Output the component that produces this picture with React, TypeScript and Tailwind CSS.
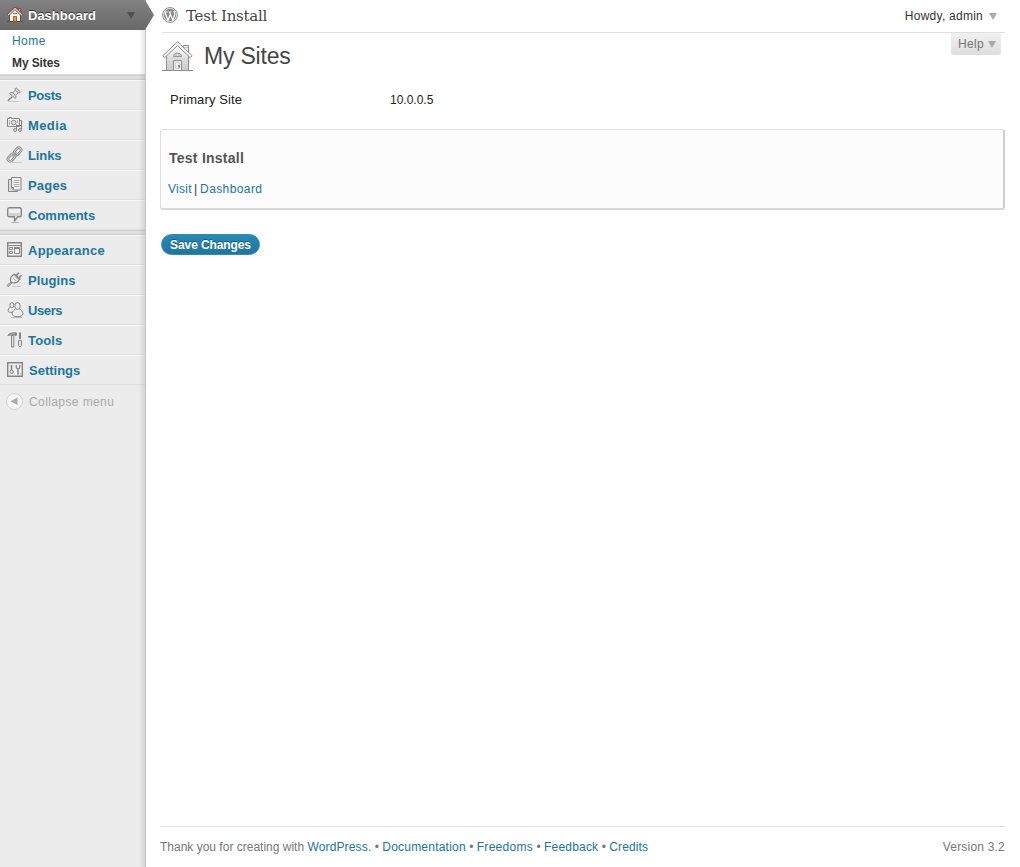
import React from "react";

type IconName = "posts" | "media" | "links" | "pages" | "comments" | "appearance" | "plugins" | "users" | "tools" | "settings";

const glyphs: Record<IconName, React.ReactNode> = {
  posts: (
    <>
      <path d="M1 14.500h11" stroke="#cacaca" />
      <path d="M5.200 9.800.800 13.700" strokeWidth="1.500" />
      <path d="M9 .800 13.300 4.800 12.300 5.900 11.200 5.700 8.700 8.400 9 10.500 8 11.300 2.600 6.500 3.600 5.500 5.800 5.700 8.500 3.200 8 1.800z" fill="#e8e8e8" />
      <path d="M5.800 5.800 8.700 8.400M8.500 3.200 11.200 5.700" />
    </>
  ),
  media: (
    <>
      <path d="M.5 1.500h2v-1h2v1h8v8H.5z" fill="#f4f4f4" />
      <circle cx="6.700" cy="5.500" r="2.300" fill="#e2e2e2" />
      <path d="M2.500 3v5M10.500 3v3" stroke="#aaa" />
      <path d="M12.500 3.500h2v9M9.500 7.500v5M9.500 8.500h5" />
      <circle cx="8.200" cy="13" r="1.500" fill="#ddd" />
      <circle cx="13" cy="13" r="1.500" fill="#ddd" />
    </>
  ),
  links: (
    <>
      <path d="M5 15.500h10" stroke="#ccc" />
      <rect x="6.300" y="2.200" width="8.500" height="4.600" rx="2.300" transform="rotate(-48 10.500 4.500)" strokeWidth="2.400" />
      <rect x="6.300" y="2.200" width="8.500" height="4.600" rx="2.300" transform="rotate(-48 10.500 4.500)" stroke="#e9e9e9" strokeWidth=".8" />
      <rect x=".2" y="8.200" width="8.500" height="4.600" rx="2.300" transform="rotate(-48 4.500 10.500)" strokeWidth="2.400" />
      <rect x=".2" y="8.200" width="8.500" height="4.600" rx="2.300" transform="rotate(-48 4.500 10.500)" stroke="#e9e9e9" strokeWidth=".8" />
      <path d="m5.500 9.500 4-4" stroke="#9a9a9a" strokeWidth="1.600" />
    </>
  ),
  pages: (
    <>
      <path d="M4 2.500H1.500v12h9V13" fill="#ddd" />
      <path d="M4.500.500h9.500v12.500h-7.500l-2-2z" fill="#f1f1f1" />
      <path d="M6.500 3.500h6M6.500 5.500h6M6.500 7.500h6M7.500 9.500h5" stroke="#b0b0b0" />
      <path d="M4.500 10.500h2v2" />
    </>
  ),
  comments: (
    <>
      <path d="M4 15.500h8" stroke="#b5b5b5" />
      <path d="M2.500.700h10c1.200 0 1.800.600 1.800 1.800v5.500c0 1.200-.6 1.800-1.800 1.800h-2L7.500 14V9.800h-5C1.300 9.800.700 9.200.700 8V2.500C.700 1.300 1.300.700 2.500.700z" fill="#f0f0f0" strokeWidth="1.400" />
      <path d="M2 7.500h11" stroke="#d2d2d2" strokeWidth="3" />
    </>
  ),
  appearance: (
    <>
      <path d="M.700.700h13.600v13.600H.700z" fill="#f3f3f3" strokeWidth="1.400" />
      <path d="M1 3.500h13" />
      <path d="M2.500 5.500h3v2h-3zM2.500 9.500h3v2h-3zM7.500 5.500h5v6h-5z" />
      <path d="M7.500 6.500h5" />
    </>
  ),
  plugins: (
    <>
      <path d="M5 14.500h9" stroke="#ccc" />
      <path d="M4.500 10.500C3.300 12.500 2 11.500.500 14.500" strokeWidth="2.400" />
      <path d="M4.500 10.500C3.300 12.500 2 11.500.500 14.500" stroke="#e5e5e5" strokeWidth=".7" />
      <path d="M7.500 2.300C4.500 3.500 2.800 6.500 4 10.300c3.800 1.400 7 .2 8.500-3z" fill="#eee" strokeWidth="1.200" />
      <path d="m6.700 1.800 6.600 6" strokeWidth="1.500" />
      <path d="M9 4 11.800.700M11.500 6.500l3-3.300" strokeWidth="1.700" />
      <path d="m6.200 6 3.300 3.300M8 4.500l3 3" stroke="#aaa" />
    </>
  ),
  users: (
    <>
      <path d="M4 15.500h11" stroke="#b8b8b8" />
      <path d="M4.200 4.800C1.500 5.500.700 7.800 1.400 9.800c1 .8 3.500.8 5 .3" fill="#eee" />
      <ellipse cx="4.900" cy="3.200" rx="2" ry="2.500" fill="#eee" />
      <path d="M8.500 6.500c-1 2-3.500 2.700-3.500 5.200 0 4 11 4 11 0 0-2.500-2.500-3.200-3.500-5.200" fill="#eee" />
      <ellipse cx="10.500" cy="4" rx="2.700" ry="3.500" fill="#eee" />
    </>
  ),
  tools: (
    <>
      <path d="M.800 3.500C2.500 1 5 .500 9.500 1v2H3z" fill="#aaa" />
      <path d="M4.500 3.500h2.300v11.500H4.500z" fill="#e6e6e6" />
      <path d="M8.800.500v3.300" strokeWidth="1.500" />
      <path d="M13 .500v6.500" strokeWidth="2" />
      <path d="M11.500 8.500h3v4.500c0 2-3 2-3 0z" fill="#e6e6e6" />
    </>
  ),
  settings: (
    <>
      <path d="M.700.700h14.600v13.600H.700z" fill="#f1f1f1" strokeWidth="1.400" />
      <path d="M4.500 3v5M11 8v4.500" strokeWidth="1.600" />
      <circle cx="4.700" cy="9.800" r="1.700" fill="#ddd" />
      <path d="M9.300 3v2.700L11 7.200l1.700-1.500V3" strokeWidth="1.300" />
      <path d="M2.500 3.500h1M6.500 3.500h1M13 11.500h1" stroke="#bbb" />
    </>
  ),
};

function MenuIcon({ name }: { name: IconName }) {
  return (
    <svg className="ml-[7px] h-4 w-4 shrink-0 overflow-visible" viewBox="0 0 16 16" fill="none" stroke="#858585" strokeLinejoin="round">
      {glyphs[name]}
    </svg>
  );
}

const content: { icon: IconName; label: string; spacing: string }[] = [
  { icon: "posts", label: "Posts", spacing: "tracking-[-0.4px]" },
  { icon: "media", label: "Media", spacing: "tracking-[0.4px]" },
  { icon: "links", label: "Links", spacing: "tracking-[-0.1px]" },
  { icon: "pages", label: "Pages", spacing: "tracking-[0.2px]" },
  { icon: "comments", label: "Comments", spacing: "tracking-[0px]" },
];

const admin: typeof content = [
  { icon: "appearance", label: "Appearance", spacing: "tracking-[0.25px]" },
  { icon: "plugins", label: "Plugins", spacing: "tracking-[0.1px]" },
  { icon: "users", label: "Users", spacing: "tracking-[-0.4px]" },
  { icon: "tools", label: "Tools", spacing: "tracking-[0.15px]" },
  { icon: "settings", label: "Settings", spacing: "tracking-[0px] pl-px" },
];

function Menu({ items }: { items: typeof content }) {
  return (
    <ul>
      {items.map((item) => (
        <li key={item.label} className="flex h-[30px] items-center border-t border-b border-t-[#f9f9f9] border-b-[#dfdfdf]">
          <MenuIcon name={item.icon} />
          <a className={`ml-[5px] pt-px text-[13px] leading-[18px] font-bold whitespace-nowrap text-[#21759b] ${item.spacing}`}>{item.label}</a>
        </li>
      ))}
    </ul>
  );
}

function Separator() {
  return <div className="h-[5px] border-y border-[#cfcfcf] bg-[#dfdfdf]" />;
}

function SmallHouse() {
  return (
    <svg className="ml-[7px] h-4 w-4 shrink-0" viewBox="0 0 16 16">
      <path d="M0 14.500h16" stroke="#4c4c4c" />
      <path d="M11.500 1.500h2v4h-2z" fill="#e9aaa0" stroke="#70382f" strokeWidth=".7" />
      <path d="M2.500 8 8 2.500 13.500 8v6.500h-11z" fill="#fff1ec" stroke="#754840" />
      <path d="m.900 8 7.100-7 7.100 7" fill="none" stroke="#693c36" strokeWidth="2.400" />
      <path d="m1.200 8 6.800-6.700L14.800 8" fill="none" stroke="#f8cdc4" strokeWidth="1.200" />
      <path d="M6.500 14.500v-5h3v5z" fill="#e2a044" stroke="#8c4c16" strokeWidth=".8" />
      <path d="M6 6.500h4" stroke="#5793bc" strokeWidth="1.400" />
    </svg>
  );
}

function LargeHouse() {
  return (
    <svg className="h-[31px] w-[31px]" viewBox="0 0 31 31" fill="none" stroke="#8e8e8e">
      <defs>
        <linearGradient id="wall" x1="0" y1="0" x2="0" y2="1">
          <stop offset="0" stopColor="#fafafa" />
          <stop offset="1" stopColor="#cacaca" />
        </linearGradient>
      </defs>
      <path d="M0 29.500h31" stroke="#8a8a8a" />
      <path d="M21.500 4.500h5v8h-5z" fill="#f2f2f2" />
      <path d="M22 6.500h4" stroke="#c5c5c5" />
      <path d="M4.500 14 15.500 4l11 10v15.500h-22z" fill="url(#wall)" />
      <path d="M5 17.500h21M5 20.500h21M5 23.500h21M5 26.500h21" stroke="#c8c8c8" strokeWidth=".5" />
      <path d="M.800 14.800 15.500.700l14.700 14.100-1.900 1.900L15.500 4.500 2.700 16.700z" fill="#f8f8f8" />
      <path d="M11.500 15.500c0-4.500 8-4.500 8 0z" fill="#e2e2e2" />
      <path d="M14 12.500v3M17 12.500v3" stroke="#b0b0b0" />
      <path d="M11.500 19.500h8v10h-8z" fill="#ececec" />
      <path d="M13.500 21.500h4v6h-4z" stroke="#cfcfcf" />
      <path d="M17 24v2.500" stroke="#6e6e6e" strokeWidth="1.500" />
    </svg>
  );
}

function Logo() {
  return (
    <svg className="h-4 w-4 shrink-0 overflow-visible" viewBox="0 0 16 16" fill="none" stroke="#858585">
      <circle cx="8" cy="8" r="7.400" fill="#fff" />
      <circle cx="8" cy="8" r="6.200" fill="#888" stroke="none" />
      <path d="M2.800 5.200 6 13.300 8.300 7.500 7.500 5.200M7.500 5.200 10.800 13.300l2-6c.3-1.200-.7-2.200-1-3.400M2.300 5h3.400M6.500 5h3" stroke="#fff" strokeWidth="1.200" />
    </svg>
  );
}

function Caret({ color }: { color: string }) {
  return (
    <svg className="h-[7px] w-2 shrink-0" viewBox="0 0 8 7">
      <path d="M0 0h8L4 7z" fill={color} />
    </svg>
  );
}

export default function App() {
  return (
    <div className="flex h-[867px] w-[1020px] overflow-hidden bg-white font-['Liberation_Sans',Arial,sans-serif] text-[12px] text-[#333]">
      <aside className="relative w-[146px] shrink-0 border-r border-[#c6c6c6] bg-[#ececec]">
        <div className="relative flex h-[30px] items-center bg-linear-to-b from-[#828282] to-[#686868]">
          <SmallHouse />
          <span className="ml-[5px] pt-px text-[13px] leading-[18px] font-bold text-white [text-shadow:0_-1px_0_#333]">Dashboard</span>
          <span className="ml-[31px] flex"><Caret color="#505050" /></span>
          <svg className="absolute top-0 left-[145px] z-10 h-[30px] w-[9px]" viewBox="0 0 9 30">
            <defs>
              <linearGradient id="arrow" x1="0" y1="0" x2="0" y2="1">
                <stop offset="0" stopColor="#828282" />
                <stop offset="1" stopColor="#686868" />
              </linearGradient>
            </defs>
            <path d="M0 0 9 15 0 30z" fill="url(#arrow)" />
          </svg>
        </div>
        <nav className="flex h-[44px] flex-col bg-white pl-3 leading-[22px]">
          <a className="tracking-[0.45px] text-[#21759b]">Home</a>
          <a className="font-bold tracking-[-0.1px]">My Sites</a>
        </nav>
        <div className="h-px bg-[#dfdfdf]" />
        <Separator />
        <Menu items={content} />
        <Separator />
        <Menu items={admin} />
        <div className="flex h-[33px] items-center pl-[6px] text-[#aaa]">
          <svg className="h-[17px] w-[17px]" viewBox="0 0 17 17">
            <circle cx="8.500" cy="8.500" r="8" fill="#f5f5f5" stroke="#cfcfcf" />
            <path d="M11.500 4.500v7.500L4.500 8.300z" fill="#aaa" />
          </svg>
          <span className="ml-[6px] pt-px tracking-[0.4px]">Collapse menu</span>
        </div>
        <div className="absolute top-[30px] right-0 bottom-0 w-[6px] bg-linear-to-r from-transparent to-black/10" />
      </aside>

      <main className="ml-[14px] flex w-[845px] flex-col">
        <header className="ml-[2px] flex h-[33px] items-center border-b border-[#dfdfdf] pb-[2px]">
          <Logo />
          <h1 className="ml-2 pt-px font-['DejaVu_Serif',serif] text-[15px] leading-5 tracking-[-0.25px] text-[#464646]">Test Install</h1>
          <span className="ml-auto pt-px tracking-[0.25px]">Howdy, admin</span>
          <span className="mr-[8px] ml-[6px] flex pt-[2px]"><Caret color="#aaa" /></span>
        </header>
        <div className="flex h-[44px] items-start pl-[2px]">
          <div className="mt-[8px]"><LargeHouse /></div>
          <h2 className="mt-[6px] ml-[11px] text-[23px] leading-[34px] tracking-[-0.2px] text-[#464646]">My Sites</h2>
          <div className="mr-[4px] ml-auto flex h-[22px] w-[50px] items-center rounded-b-[3px] bg-linear-to-b from-[#f0f0f0] to-[#dedede] pl-[7px] text-[#777]">
            <span className="tracking-[0.3px]">Help</span>
            <span className="ml-[4px] flex"><Caret color="#aaa" /></span>
          </div>
        </div>
        <div className="flex h-[52px] items-center pl-[10px]">
          <div className="w-[220px] pb-[6px] text-[13px] tracking-[0.1px] text-[#222]">Primary Site</div>
          <div className="pb-[6px] text-[12px] text-[#222]">10.0.0.5</div>
        </div>
        <section className="h-[81px] shrink-0 rounded-[3px] border border-r-2 border-b-2 border-[#dfdfdf] border-r-[#cfcfcf] border-b-[#d8d8d8] bg-[#fcfcfc] pt-[18px] pl-[7px]">
          <h3 className="pl-px text-[14px] leading-5 font-bold tracking-[0.25px] text-[#555]">Test Install</h3>
          <p className="mt-[12px] leading-[18px] text-[#333]">
            <a className="tracking-[0.3px] text-[#21759b]">Visit</a>
            <span className="mr-[3px] ml-[2px]">|</span>
            <a className="tracking-[0.4px] text-[#21759b]">Dashboard</a>
          </p>
        </section>
        <button className="mt-[24px] ml-px h-[21px] w-[99px] shrink-0 rounded-full border border-[#298cba] bg-linear-to-b from-[#278ab7] to-[#21759b] text-[12px] leading-[18px] font-bold tracking-[-0.1px] whitespace-nowrap text-white [text-shadow:0_-1px_0_#195773]">Save Changes</button>
        <footer className="mt-auto flex h-[41px] shrink-0 items-center justify-between border-t border-[#dfdfdf] text-[#777]">
          <p className="whitespace-nowrap">
            Thank you for creating with <a className="tracking-[0.15px] text-[#21759b]">WordPress.</a> • <a className="tracking-[0.22px] text-[#21759b]">Documentation</a> • <a className="tracking-[0.3px] text-[#21759b]">Freedoms</a> • <a className="tracking-[0.2px] text-[#21759b]">Feedback</a> • <a className="tracking-[0.15px] text-[#21759b]">Credits</a>
          </p>
          <span className="tracking-[0.2px]">Version 3.2</span>
        </footer>
      </main>
    </div>
  );
}
